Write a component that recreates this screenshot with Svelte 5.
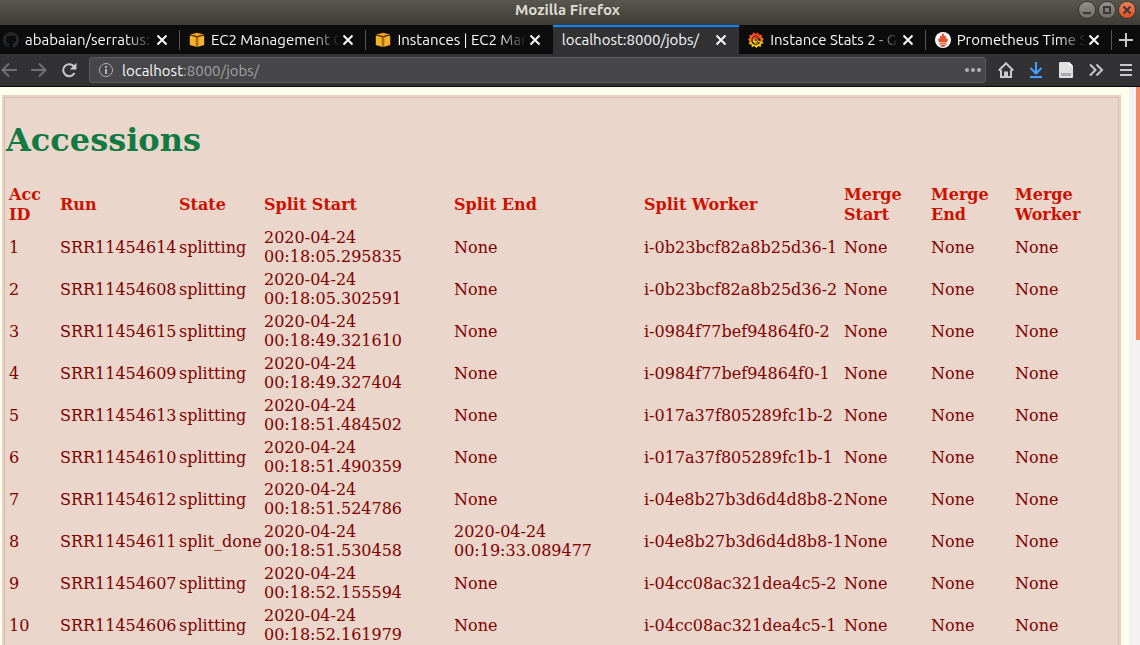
<script>
  const tabs = [
    { title: 'ababaian/serratus:', icon: 'github' },
    { title: 'EC2 Management C', icon: 'aws' },
    { title: 'Instances | EC2 Man', icon: 'aws' },
    { title: 'localhost:8000/jobs/', icon: '', active: true },
    { title: 'Instance Stats 2 - G', icon: 'grafana' },
    { title: 'Prometheus Time S', icon: 'prometheus' }
  ];
  const columns = [
    ['Acc ID', 49], ['Run', 117], ['State', 83], ['Split Start', 188], ['Split End', 188],
    ['Split Worker', 198], ['Merge Start', 85], ['Merge End', 82], ['Merge Worker', 101]
  ];
  const total = columns.reduce((sum, c) => sum + c[1], 0);
  const rows = [
    [1, 'SRR11454614', 'splitting', '2020-04-24 00:18:05.295835', 'None', 'i-0b23bcf82a8b25d36-1'],
    [2, 'SRR11454608', 'splitting', '2020-04-24 00:18:05.302591', 'None', 'i-0b23bcf82a8b25d36-2'],
    [3, 'SRR11454615', 'splitting', '2020-04-24 00:18:49.321610', 'None', 'i-0984f77bef94864f0-2'],
    [4, 'SRR11454609', 'splitting', '2020-04-24 00:18:49.327404', 'None', 'i-0984f77bef94864f0-1'],
    [5, 'SRR11454613', 'splitting', '2020-04-24 00:18:51.484502', 'None', 'i-017a37f805289fc1b-2'],
    [6, 'SRR11454610', 'splitting', '2020-04-24 00:18:51.490359', 'None', 'i-017a37f805289fc1b-1'],
    [7, 'SRR11454612', 'splitting', '2020-04-24 00:18:51.524786', 'None', 'i-04e8b27b3d6d4d8b8-2'],
    [8, 'SRR11454611', 'split_done', '2020-04-24 00:18:51.530458', '2020-04-24 00:19:33.089477', 'i-04e8b27b3d6d4d8b8-1'],
    [9, 'SRR11454607', 'splitting', '2020-04-24 00:18:52.155594', 'None', 'i-04cc08ac321dea4c5-2'],
    [10, 'SRR11454606', 'splitting', '2020-04-24 00:18:52.161979', 'None', 'i-04cc08ac321dea4c5-1']
  ];
</script>

{#snippet favicon(name)}
  <svg class="favicon" viewBox="0 0 16 16" aria-hidden="true">
    {#if name === 'github'}
      <path fill="#24292e" d="M8 0C3.58 0 0 3.58 0 8c0 3.54 2.29 6.53 5.47 7.59.4.07.55-.17.55-.38 0-.19-.01-.82-.01-1.49-2.01.37-2.53-.49-2.69-.94-.09-.23-.48-.94-.82-1.13-.28-.15-.68-.52-.01-.53.63-.01 1.08.58 1.23.82.72 1.21 1.87.87 2.33.66.07-.52.28-.87.51-1.07-1.78-.2-3.64-.89-3.64-3.95 0-.87.31-1.59.82-2.15-.08-.2-.36-1.02.08-2.12 0 0 .67-.21 2.2.82a7.6 7.6 0 0 1 4 0c1.53-1.04 2.2-.82 2.2-.82.44 1.1.16 1.92.08 2.12.51.56.82 1.27.82 2.15 0 3.07-1.87 3.75-3.65 3.95.29.25.54.73.54 1.48 0 1.07-.01 1.93-.01 2.2 0 .21.15.46.55.38A8 8 0 0 0 16 8c0-4.42-3.58-8-8-8z" />
    {:else if name === 'aws'}
      <path fill="#f59e1c" d="M1 2.500 8 .8l7 1.700L8 4.200z" />
      <path fill="#f5b02c" d="M.8 3.500 7.700 5v10L.8 13zM15.200 3.500 8.300 5v10l6.900-2z" />
      <path fill="#a96f14" d="M6 5 8 5.400V15l-1.300-.3V6.400zM10 5l-2 .4V15l1.300-.3V6.400z" />
      <path stroke="#5e3b08" stroke-width=".8" fill="none" d="m1 3 7 1.800L15 3" />
    {:else if name === 'grafana'}
      <defs>
        <linearGradient id="flame" x1="0" y1="0" x2="0" y2="1">
          <stop offset="0" stop-color="#f02b22" /><stop offset=".5" stop-color="#f78a1c" /><stop offset="1" stop-color="#ffed00" />
        </linearGradient>
      </defs>
      <path fill="url(#flame)" d="m8 1.800 2.300-1.600.8 2.700 2.800-.3-.4 2.800 2.300 1.400-1.600 2.100 1.400 2.500-2.600.7-.2 2.800-2.600-.8L8.300 16l-1.700-2-2.800 1.300-.3-2.800-2.900-.5 1.200-2.500L0 7.500l2-1.700L1.200 3l2.800-.1L5 .2z" />
      <circle cx="8" cy="8.200" r="4.600" fill="#0c0c0d" />
      <path fill="none" stroke="url(#flame)" stroke-width="1.400" d="M11.500 6.600A3.300 3.300 0 1 0 9.800 10.800M8.800 9.200A1.500 1.500 0 1 1 9.500 7.800c.3 1.700 1.300 2.200 3.300 1.700" />
    {:else if name === 'prometheus'}
      <circle cx="8" cy="8" r="8" fill="#fff" />
      <path fill="#e6522c" d="M8 1c1.300 1.500 1 2.500 1.700 3.500.3-.5.300-1 .2-1.500 1.700 1.700 1.100 3 1.900 4.200.4-.3.700-.6.900-1.100.500 2.100-.2 3.400-1 4.400H4.300c-.8-1-1.500-2.300-1-4.400.2.500.5.800.900 1.100C5 6 4.400 4.700 6.100 3c-.1.500-.1 1 .2 1.500C7 3.500 6.700 2.500 8 1zM4.200 11.200h7.600v1.300H4.200zM5.200 13h5.600c-.4 1.200-1.500 1.900-2.800 1.900s-2.400-.7-2.800-1.900z" />
    {/if}
  </svg>
{/snippet}

<div class="window">
  <header class="titlebar">
    <span>Mozilla Firefox</span>
    <div class="controls">
      <button aria-label="Minimize"><svg viewBox="0 0 16 16"><path d="M4 11h8" /></svg></button>
      <button aria-label="Maximize"><svg viewBox="0 0 16 16"><path d="M5 5h6v6H5z" /></svg></button>
      <button class="quit" aria-label="Close window"><svg viewBox="0 0 16 16"><path d="m4.500 4.500 7 7m0-7-7 7" /></svg></button>
    </div>
  </header>

  <nav class="tabs" aria-label="Tabs">
    {#each tabs as tab}
      <div class="tab" class:active={tab.active}>
        {#if tab.icon}{@render favicon(tab.icon)}{/if}
        <span class="title">{tab.title}</span>
        <button class="close" aria-label="Close tab"><svg viewBox="0 0 12 12"><path d="m1.500 1.500 9 9m0-9-9 9" /></svg></button>
      </div>
    {/each}
    <button class="new" aria-label="New tab"><svg viewBox="0 0 14 14"><path d="M7 0v14M0 7h14" /></svg></button>
  </nav>

  <div class="toolbar">
    <button class="dim" aria-label="Back"><svg viewBox="0 0 16 16"><path d="M16 8H1.500M8 1.500 1.500 8 8 14.500" /></svg></button>
    <button class="dim" aria-label="Forward"><svg viewBox="0 0 16 16"><path d="M0 8h14.500M8 1.500 14.500 8 8 14.500" /></svg></button>
    <button aria-label="Reload"><svg viewBox="0 0 16 16"><path d="M13.300 5A6 6 0 1 0 13.500 11" /><path class="solid" d="M15.500.8v6.700H8.800z" /></svg></button>
    <div class="address">
      <svg class="info" viewBox="0 0 16 16" aria-hidden="true"><circle cx="8" cy="8" r="6.500" /><path stroke-width="2" d="M8 7v5M8 4v2" /></svg>
      <a href="#jobs">localhost<span>:8000/jobs/</span></a>
      <button class="dots" aria-label="Page actions"><svg viewBox="0 0 16 16"><circle cx="2" cy="8" r="2" /><circle cx="8" cy="8" r="2" /><circle cx="14" cy="8" r="2" /></svg></button>
    </div>
    <div class="tools">
      <button aria-label="Home"><svg viewBox="0 0 16 16"><path d="M.8 8.500 8 1.300l7.200 7.200M3 8v7h10V8" /><path d="M7 15v-4.500h2V15" /></svg></button>
      <button class="download" aria-label="Downloads"><svg viewBox="0 0 16 16"><path d="M8 0v11M2.500 6 8 11.500 13.500 6M2 15h12" /></svg></button>
      <button aria-label="Document"><svg viewBox="0 0 16 16"><path fill="#e0e0e0" stroke="none" d="M2 0h9l4 4v11a1 1 0 0 1-1 1H2a1 1 0 0 1-1-1V1a1 1 0 0 1 1-1z" /><path fill="#a9a9a9" stroke="none" d="M3 11h10v3H3z" /><path fill="#fff" stroke="none" d="M11 0v4h4z" /></svg></button>
      <button aria-label="More tools"><svg viewBox="0 0 16 16"><path d="m2 2.500 5.500 5.500L2 13.500M8.500 2.500 14 8l-5.500 5.500" /></svg></button>
      <button aria-label="Menu"><svg viewBox="0 0 16 16"><path d="M2 3h12M2 8h12M2 13h12" /></svg></button>
    </div>
  </div>

  <div class="viewport">
    <main>
      <section>
        <h1>Accessions</h1>
        <table>
          <colgroup>
            {#each columns as column}<col style:width="{(column[1] / total) * 100}%" />{/each}
          </colgroup>
          <thead>
            <tr>{#each columns as column}<th scope="col">{column[0]}</th>{/each}</tr>
          </thead>
          <tbody>
            {#each rows as row}
              <tr>
                {#each row as cell, i}<td class:worker={i === 5}>{cell}</td>{/each}
                <td>None</td><td>None</td><td>None</td>
              </tr>
            {/each}
          </tbody>
        </table>
      </section>
    </main>
    <div class="scrollbar"><div class="thumb"></div></div>
  </div>
</div>

<style>
  :global(body) { margin: 0; }
  .window {
    display: flex;
    flex-direction: column;
    height: 100vh;
    overflow: hidden;
    font-family: Ubuntu, 'Noto Sans', sans-serif;
    font-size: 15px;
  }
  button {
    display: flex;
    flex: none;
    padding: 0;
    border: 0;
    background: none;
    color: #c9c9ca;
  }
  svg {
    display: block;
    flex: none;
    width: 16px;
    height: 16px;
    fill: none;
    stroke: currentColor;
    stroke-width: 2;
  }
  .titlebar {
    display: grid;
    grid-template-columns: 1fr auto 1fr;
    align-items: center;
    flex: none;
    height: 20px;
    padding: 0 5px 5px 0;
    background: linear-gradient(#59574f, #3d3c37);
    color: #dfdbd2;
    font-weight: 600;
  }
  .titlebar span { grid-column: 2; line-height: 20px; }
  .controls { display: flex; justify-content: flex-end; gap: 4px; }
  .controls button {
    border-radius: 50%;
    background: linear-gradient(#92918c, #6d6c66);
    box-shadow: 0 0 0 1px #33322e;
    color: #3a3935;
  }
  .controls .quit { background: linear-gradient(#f5805b, #dd4e1f); }
  .tabs {
    display: flex;
    flex: none;
    height: 29px;
    background: #0c0c0d;
    color: #f9f9fa;
  }
  .tab {
    display: flex;
    flex: 1 1 0;
    align-items: center;
    box-sizing: border-box;
    min-width: 0;
    padding: 0 12px 0 9px;
    position: relative;
  }
  .tab:first-child { flex-grow: 0; flex-basis: 180px; padding-left: 3px; }
  .tab::after {
    content: '';
    position: absolute;
    right: 0;
    top: 5px;
    bottom: 4px;
    width: 1px;
    background: #55555a;
  }
  .tab.active::after, .tab:has(+ .active)::after { display: none; }
  .active { background: #323234; box-shadow: inset 0 2px #0a84ff; }
  .favicon { stroke: none; margin-right: 6px; }
  .title {
    flex: 1;
    min-width: 0;
    overflow: hidden;
    white-space: nowrap;
    line-height: 24px;
    mask-image: linear-gradient(to left, transparent, #000 28px);
  }
  .active .title { mask-image: none; }
  .close { margin-left: 2px; color: #f9f9fa; }
  .close svg { width: 12px; height: 12px; }
  .new { width: 28px; align-items: center; justify-content: center; }
  .new svg { width: 14px; height: 14px; }
  .toolbar {
    display: flex;
    flex: none;
    align-items: center;
    gap: 14px;
    height: 32px;
    padding: 0 6px 0 1px;
    background: #323234;
    border-bottom: 1px solid #0c0c0d;
  }
  .dim { color: #717173; }
  .solid { fill: currentColor; stroke: none; }
  .address {
    display: flex;
    flex: 1;
    align-items: center;
    box-sizing: border-box;
    height: 26px;
    margin-left: -2px;
    padding: 0 4px 0 8px;
    border: 1px solid #5b5b5d;
    border-radius: 3px;
    background: #474749;
  }
  .info { color: #b1b1b3; stroke-width: 1; }
  .address a { flex: 1; margin-left: 8px; color: #f9f9fa; text-decoration: none; }
  .address a span { color: #a2a2a3; }
  .dots svg { fill: #b1b1b3; stroke: none; }
  .tools { display: flex; gap: 14px; margin-left: -2px; }
  .download { color: #45a1ff; }
  .viewport { display: flex; flex: 1; min-height: 0; background: #ffffeb; }
  main { flex: 1; min-width: 0; padding: 8px 8px 0 2px; overflow: hidden; }
  section {
    padding: 2px 2px 24px;
    border: 2px solid #e9d1c8;
    box-shadow: inset 0 0 0 1px #d8bfb5;
    background: #ead6cb;
    font: 16px/19px 'DejaVu Serif', serif;
    color: #800000;
  }
  h1 {
    margin: 22px 0;
    color: #117a43;
    font-size: 32px;
    line-height: 38px;
  }
  table { width: 100%; table-layout: fixed; border-spacing: 2px; }
  th, td { padding: 1px; text-align: left; }
  th { padding: 2px 1px 0; color: #cc1100; line-height: 20px; }
  .worker { white-space: nowrap; }
  .scrollbar { flex: none; width: 11px; background: #f2f1f0; }
  .thumb { width: 4px; height: 253px; margin-left: auto; background: #f28d68; }
</style>
